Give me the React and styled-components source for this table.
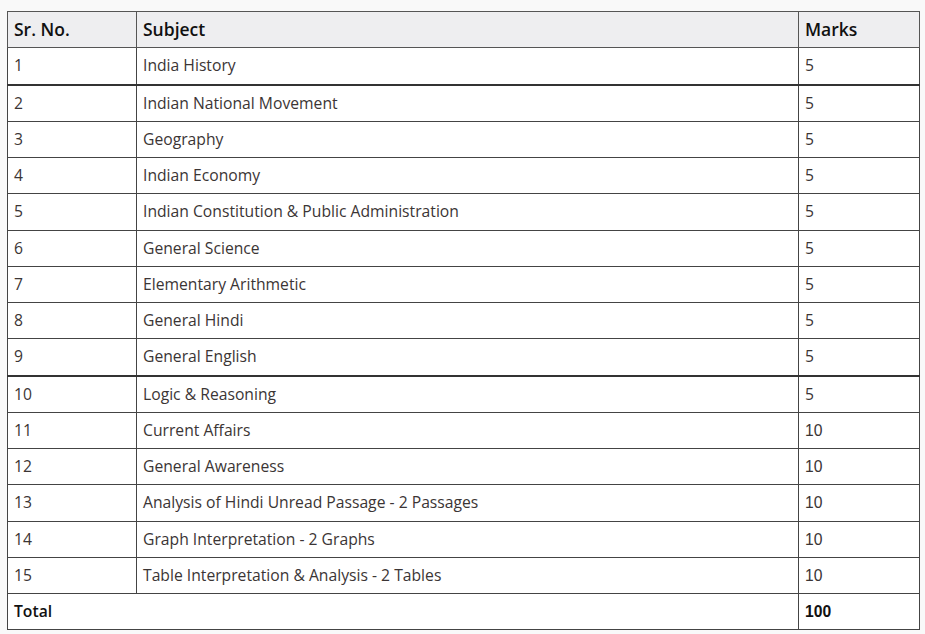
import React from "react";
import styled, { createGlobalStyle } from "styled-components";

const Global = createGlobalStyle`
  html, body { margin: 0; padding: 0; background: #f9f9f9; }
  body { font-family: "Open Sans", "Noto Sans", sans-serif; }
`;

const Page = styled.div`
  padding: 11px 6px 0 7px;
`;

const Table = styled.table`
  width: 913px;
  border-collapse: collapse;
  background: #fff;
  border: 1px solid #444;
`;

const Th = styled.th`
  text-align: left;
  font-weight: 600;
  font-size: 17.5px;
  line-height: 23.25px;
  color: #111;
  background: #eeeef0;
  padding: 6px 6px;
  border: 1px solid #555;
  width: ${(p) => p.$w || "auto"};
`;

const Tr = styled.tr`
  border-bottom: ${(p) => (p.$thick ? "2px solid #333" : "1px solid #444")};
`;

const Td = styled.td`
  font-size: 15.7px;
  line-height: 23.25px;
  color: #3b3535;
  padding: 6px 6px;
  border-left: 1px solid #444;
  border-right: 1px solid #444;
  font-family: ${(p) => (p.$arial ? '"Liberation Sans", Arial, sans-serif' : "inherit")};
  font-weight: ${(p) => (p.$bold ? 600 : 400)};
  ${(p) => p.$total && "color: #111;"}
`;

const rows = [
  ["1", "India History", "5"],
  ["2", "Indian National Movement", "5"],
  ["3", "Geography", "5"],
  ["4", "Indian Economy", "5"],
  ["5", "Indian Constitution & Public Administration", "5"],
  ["6", "General Science", "5"],
  ["7", "Elementary Arithmetic", "5"],
  ["8", "General Hindi", "5"],
  ["9", "General English", "5"],
  ["10", "Logic & Reasoning", "5"],
  ["11", "Current Affairs", "10"],
  ["12", "General Awareness", "10"],
  ["13", "Analysis of Hindi Unread Passage - 2 Passages", "10"],
  ["14", "Graph Interpretation - 2 Graphs", "10"],
  ["15", "Table Interpretation & Analysis - 2 Tables", "10"],
];

export default function App() {
  return (
    <>
      <Global />
      <Page>
        <Table>
          <thead>
            <Tr>
              <Th $w="116px">Sr. No.</Th>
              <Th>Subject</Th>
              <Th $w="108px">Marks</Th>
            </Tr>
          </thead>
          <tbody>
            {rows.map(([n, s, m]) => (
              <Tr key={n} $thick={n === "1" || n === "9"}>
                <Td>{n}</Td>
                <Td>{s}</Td>
                <Td $arial={m === "10"}>{m}</Td>
              </Tr>
            ))}
            <Tr>
              <Td colSpan={2} $bold $total>Total</Td>
              <Td $arial $bold $total>100</Td>
            </Tr>
          </tbody>
        </Table>
      </Page>
    </>
  );
}
